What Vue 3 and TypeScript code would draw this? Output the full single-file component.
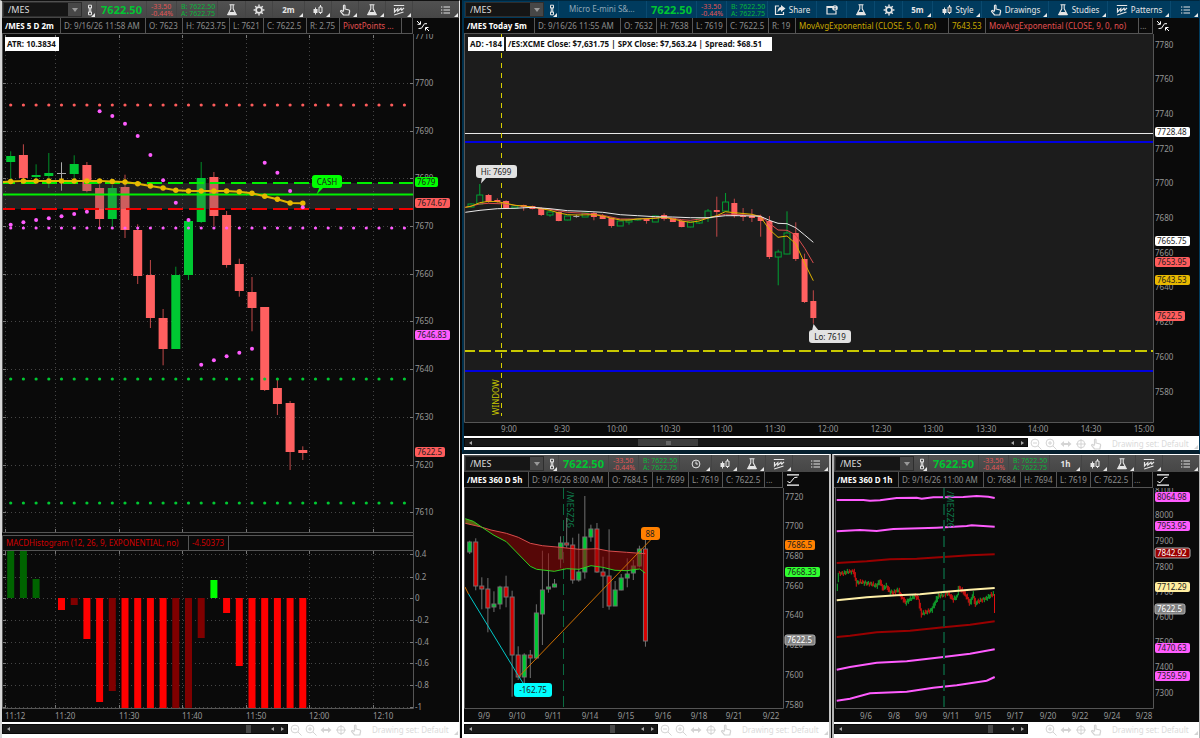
<script setup lang="ts">
type Kind = 'g' | 'r' | 'n'
type Row = [Kind, number, number, number, number]
interface Candle { kind: Kind; x: number; top: number; h: number; hi: number; lo: number }
interface Mark { x: number; y: number; t: string }
interface Tag { y: number; t: string; c: string }

// Plot data is stored on a fine grid of three steps to the unit.
const at = (origin: number, step: number): number => Math.round((origin + step / 3) * 10) / 10
const line = (ox: number, oy: number, pts: number[][]): string =>
  pts.map(([x, y]) => `${at(ox, x)},${at(oy, y)}`).join(' ')
const candles = (rows: Row[], x0: number, gap: number, oy: number): Candle[] =>
  rows.map(([kind, a, b, hi, lo], i) => ({
    kind, x: x0 + gap * i, top: Math.round(at(oy, a)), h: Math.max(1, Math.round(at(oy, b)) - Math.round(at(oy, a))), hi: at(oy, hi), lo: at(oy, lo),
  }))
const labels = (xs: number[], ts: string[]): Mark[] => xs.map((x, i) => ({ x, y: 0, t: ts[i] }))
const prices = (ys: number[], from: number, step: number): Mark[] => ys.map((y, i) => ({ x: 0, y, t: String(from - step * i) }))

/* two-minute chart */
const slots = Array.from({ length: 32 }, (_, i) => 10.7 + 12.7 * i)
const gridX = [5, 55, 119, 182, 246, 309, 373]
const times1 = labels(gridX, ['11:12', '11:20', '11:30', '11:40', '11:50', '12:00', '12:10'])
const prices1 = prices([36, 83, 131, 178, 226, 274, 321, 369, 417, 465, 512], 7710, 10)
const candles1 = candles([
  ['g', 228, 246, 214, 297], ['r', 225, 293, 193, 297], ['g', 284, 291, 253, 297], ['g', 279, 288, 219, 324],
  ['n', 280, 282, 247, 332], ['g', 252, 282, 226, 300], ['r', 254, 332, 246, 337], ['r', 324, 417, 313, 441],
  ['g', 324, 417, 315, 441], ['r', 322, 450, 284, 474], ['r', 450, 588, 433, 612], ['r', 586, 715, 540, 744],
  ['r', 713, 807, 687, 856], ['g', 584, 807, 560, 807], ['g', 423, 586, 415, 600], ['g', 293, 426, 246, 429],
  ['r', 291, 408, 276, 438], ['r', 405, 555, 393, 563], ['r', 552, 633, 536, 650], ['r', 635, 683, 591, 754],
  ['r', 681, 929, 681, 933], ['r', 924, 972, 900, 1005], ['r', 968, 1115, 963, 1170], ['r', 1110, 1119, 1099, 1140],
], 10.7, 12.7, 80)
const average1 = [181.5, 181, 181, 181, 181, 181, 181, 181, 181.5, 182, 183.7, 186, 188, 190.3, 191, 191, 191, 191, 191.7, 193.3, 196.3, 199.3, 203, 203.3]
const averageLine1 = '3,182 ' + average1.map((y, i) => `${slots[i]},${y}`).join(' ')
const sar = [224.7, 222.3, 220, 218.3, 216.3, 214, 211.7, 111.3, 116, 123.7, 136, 155, 180.3, 202.7, 220, 364.7, 360.3, 356.3, 352.7, 348.7, 162.7, 172.7, 191, 207.3]
const pivots = [{ y: 105, c: 'coral' }, { y: 228, c: 'pink' }, { y: 379, c: 'leaf' }, { y: 503, c: 'leaf' }]
const tags1: Tag[] = [{ y: 182, t: '7679', c: 'lime' }, { y: 203, t: '7674.67', c: 'coral' }, { y: 335, t: '7646.83', c: 'pink' }, { y: 452, t: '7622.5', c: 'coral' }]
const macdGrid: Mark[] = [554, 577, 598, 620, 642, 663, 685, 707].map((y, i) => ({ x: 0, y, t: ['0.4', '0.2', '0', '-0.2', '-0.4', '-0.6', '-0.8', '-1'][i] }))
const macd: [number, number, number, string][] = [
  [0, 551, 598, 'deep'], [1, 551, 598, 'deep'], [2, 579, 598, 'deep'], [4, 598, 610, 'hot'], [5, 598, 605, 'wine'],
  [6, 598, 639, 'hot'], [7, 598, 702, 'hot'], [8, 598, 691, 'wine'], [9, 598, 708, 'hot'], [10, 598, 708, 'hot'],
  [11, 598, 708, 'hot'], [12, 598, 708, 'hot'], [13, 598, 708, 'wine'], [14, 598, 708, 'wine'], [15, 598, 638, 'wine'],
  [16, 580, 598, 'lime'], [17, 598, 613, 'hot'], [18, 598, 666, 'hot'], [19, 598, 708, 'hot'], [20, 598, 708, 'hot'],
  [21, 598, 708, 'hot'], [22, 598, 708, 'hot'], [23, 598, 708, 'hot'],
]

/* five-minute chart */
const prices2 = prices([45, 79, 114, 149, 183, 218, 253, 287, 322, 357, 392], 7780, 20)
const times2 = labels([509, 562, 617, 670, 722, 775, 828, 881, 933, 986, 1038, 1091, 1144],
  ['9:00', '9:30', '10:00', '10:30', '11:00', '11:30', '12:00', '12:30', '13:00', '13:30', '14:00', '14:30', '15:00'])
const candles2 = candles([
  ['g', 251, 260, 250, 262], ['g', 226, 253, 192, 255], ['r', 225, 246, 222, 248], ['r', 239, 247, 235, 248],
  ['r', 243, 265, 241, 266], ['g', 257, 265, 257, 265], ['r', 256, 262, 254, 272], ['r', 258, 266, 257, 268],
  ['r', 265, 285, 262, 288], ['g', 277, 284, 274, 290], ['r', 276, 303, 275, 304], ['g', 289, 301, 289, 301],
  ['n', 287, 289, 284, 293], ['g', 278, 290, 278, 290], ['r', 278, 291, 276, 301], ['r', 287, 297, 282, 297],
  ['r', 295, 318, 292, 323], ['g', 304, 317, 304, 317], ['g', 299, 307, 296, 314], ['g', 296, 300, 294, 302],
  ['r', 296, 303, 294, 311], ['g', 287, 305, 287, 305], ['r', 285, 296, 280, 302], ['r', 295, 306, 293, 306],
  ['r', 302, 320, 300, 322], ['g', 306, 322, 306, 322], ['g', 297, 308, 294, 312], ['g', 274, 294, 267, 306],
  ['r', 271, 275, 230, 350], ['g', 247, 272, 219, 275], ['r', 248, 287, 236, 293], ['r', 287, 291, 264, 303],
  ['r', 287, 294, 267, 306], ['r', 291, 303, 284, 350], ['r', 303, 411, 288, 417], ['g', 397, 411, 389, 496],
  ['g', 339, 401, 274, 403], ['r', 339, 416, 307, 423], ['r', 416, 545, 401, 549], ['r', 543, 594, 511, 611],
], 471, 8.778, 120)
const fast = line(460, 120, [[16, 262], [33, 259], [59, 248], [86, 244], [112, 245], [138, 250], [165, 256], [191, 258], [217, 261], [244, 266], [270, 271], [297, 279], [323, 284], [349, 285], [402, 284], [428, 288], [455, 295], [481, 300], [507, 300], [533, 297], [586, 295], [612, 292], [638, 297], [665, 303], [691, 307], [717, 303], [744, 294], [770, 287], [796, 275], [823, 278], [876, 283], [901, 290], [928, 328], [954, 352], [981, 348], [1007, 371], [1034, 430], [1060, 482]])
const middle = line(460, 120, [[16, 262], [59, 252], [86, 250], [138, 252], [165, 256], [217, 262], [270, 268], [323, 277], [375, 280], [428, 286], [481, 297], [533, 297], [586, 294], [612, 291], [665, 299], [691, 301], [744, 294], [796, 283], [823, 283], [901, 287], [928, 310], [954, 330], [981, 331], [1007, 345], [1034, 385], [1060, 429]])
const slow = line(460, 120, [[16, 277], [60, 271], [112, 266], [165, 265], [217, 262], [270, 266], [323, 272], [375, 274], [428, 277], [481, 284], [533, 287], [586, 290], [638, 291], [691, 293], [744, 293], [796, 287], [850, 287], [901, 289], [928, 301], [954, 310], [981, 311], [1007, 323], [1034, 345], [1060, 367]])
const tags2: Tag[] = [{ y: 132, t: '7728.48', c: 'white' }, { y: 241, t: '7665.75', c: 'white' }, { y: 262, t: '7653.95', c: 'coral' }, { y: 280, t: '7643.53', c: 'gold' }, { y: 316, t: '7622.5', c: 'coral' }]

/* five-hour chart */
const prices3 = prices([497, 526, 556, 586, 615, 645, 675, 705], 7720, 20)
const times3 = labels([484, 517, 553, 590, 626, 663, 699, 734, 771], ['9/9', '9/10', '9/11', '9/14', '9/15', '9/16', '9/18', '9/21', '9/22'])
const candles3 = candles([
  ['g', 187, 216, 182, 222], ['r', 187, 319, 175, 331], ['r', 318, 326, 292, 388], ['r', 328, 384, 294, 457],
  ['g', 373, 382, 334, 396], ['g', 320, 373, 317, 388], ['r', 320, 352, 287, 382], ['r', 352, 524, 332, 650],
  ['r', 524, 591, 499, 600], ['g', 524, 591, 520, 610], ['r', 525, 533, 510, 594], ['g', 400, 535, 373, 538],
  ['g', 329, 403, 212, 495], ['g', 321, 328, 220, 338], ['g', 313, 322, 297, 322], ['g', 190, 238, 169, 265],
  ['r', 189, 196, 113, 203], ['r', 195, 299, 173, 311], ['g', 276, 299, 161, 305], ['g', 171, 276, 48, 296],
  ['g', 147, 171, 134, 185], ['r', 147, 275, 129, 278], ['r', 277, 287, 230, 384], ['r', 288, 377, 148, 389],
  ['g', 329, 377, 303, 377], ['g', 295, 330, 282, 331], ['g', 281, 294, 235, 322], ['g', 259, 280, 240, 300],
  ['g', 207, 259, 197, 262], ['r', 207, 484, 180, 500],
], 469.7, 6.06, 480)
const upper = [[16, 130], [60, 140], [93, 150], [139, 160], [175, 172], [211, 190], [247, 197], [300, 202], [357, 208], [410, 206], [446, 213], [500, 217], [556, 221]]
const lower = [[16, 116], [40, 124], [66, 142], [102, 166], [139, 185], [175, 222], [211, 259], [230, 268], [283, 274], [320, 266], [357, 268], [393, 257], [428, 262], [465, 271], [501, 272], [520, 269], [539, 267], [556, 279]]
const upperLine = line(460, 480, upper)
const lowerLine = line(460, 480, lower)
const cloud = line(460, 480, [[66, 142], ...upper.slice(2), ...[...lower].reverse().slice(0, 15)])
const tip = line(460, 480, [[16, 130], [60, 140], [66, 142], [40, 124], [16, 116]])
const tags3: Tag[] = [{ y: 545, t: '7686.5', c: 'orange' }, { y: 572, t: '7668.33', c: 'spring' }, { y: 640, t: '7622.5', c: 'gray' }]

/* one-hour chart */
const prices4 = prices([490, 515, 541, 567, 592, 617, 642, 667, 693], 8100, 100)
const times4 = labels([866, 894, 921, 951, 983, 1015, 1048, 1080, 1112, 1144], ['9/6', '9/8', '9/9', '9/11', '9/15', '9/17', '9/20', '9/22', '9/24', '9/28'])
const bands: { c: string; p: string }[] = [
  { c: 'pink', p: line(830, 480, [[20, 60], [100, 60], [120, 62], [150, 61], [200, 54], [260, 53], [275, 56], [310, 52], [400, 51], [440, 48], [475, 50], [494, 54]]) },
  { c: 'pink', p: line(830, 480, [[20, 154], [90, 150], [140, 153], [190, 147], [270, 145], [320, 143], [410, 138], [425, 136], [494, 140]]) },
  { c: 'blood', p: line(830, 480, [[20, 249], [110, 244], [180, 238], [260, 236], [340, 231], [420, 226], [494, 223]]) },
  { c: 'blood', p: line(830, 480, [[20, 471], [60, 467], [140, 457], [240, 452], [340, 442], [420, 434], [494, 424]]) },
  { c: 'pink', p: line(830, 480, [[20, 569], [60, 561], [140, 548], [230, 544], [340, 531], [420, 521], [494, 508]]) },
  { c: 'pink', p: line(830, 480, [[20, 662], [60, 656], [120, 640], [230, 635], [310, 623], [380, 616], [470, 602], [494, 591]]) },
]
const mean = line(830, 480, [[20, 361], [110, 352], [200, 346], [270, 343], [340, 336], [420, 329], [494, 324]])
const route = [[22, 322], [26, 280], [40, 280], [55, 275], [72, 275], [80, 308], [95, 306], [110, 310], [125, 312], [140, 318], [150, 304], [160, 325], [170, 318], [180, 335], [190, 338], [205, 330], [215, 350], [228, 368], [240, 358], [255, 348], [265, 355], [275, 402], [290, 396], [305, 390], [315, 370], [325, 348], [340, 345], [355, 340], [370, 358], [382, 350], [386, 322], [400, 335], [412, 352], [420, 370], [430, 345], [436, 370], [450, 362], [470, 355], [480, 348], [490, 342], [494, 397]]
const hourly = Array.from({ length: 157 }, (_, i) => {
  const x = 22 + i * 3
  const k = Math.max(1, route.findIndex((p) => p[0] >= x))
  const [x1, y1] = route[k - 1]
  const [x2, y2] = route[k]
  const slope = (y2 - y1) / (x2 - x1)
  const y = y1 + slope * (x - x1) + Math.sin(i * 2.4) * 3
  const reach = 3 + Math.min(8, Math.abs(slope) * 2) + Math.abs(Math.sin(i * 1.7)) * 3
  const rising = slope < -0.6 || (slope < 0.6 && Math.sin(i * 1.9) > 0)
  return { x: at(830, x), a: at(480, y - reach), b: at(480, y + reach), kind: rising ? 'g' : 'r' }
})
const tags4: Tag[] = [{ y: 497, t: '8064.98', c: 'pink' }, { y: 526, t: '7953.95', c: 'pink' }, { y: 553, t: '7842.92', c: 'blood' }, { y: 587, t: '7712.29', c: 'cream' }, { y: 609, t: '7622.5', c: 'gray' }, { y: 648, t: '7470.63', c: 'pink' }, { y: 676, t: '7359.59', c: 'pink' }]

const tagWidth = (t: string): number => (t.length > 6 ? 35 : t.length > 4 ? 30 : 23)

interface Tool { icon?: string; text?: string; label: string; size: string; menu?: boolean }
interface Panel { id: string; name?: string; tools: Tool[]; info: { t: string; c?: string }[]; corner: string; hideOut?: boolean }
const shortTools = (first: Tool): Tool[] => [
  first,
  { icon: 'bars', label: 'Style', size: 'w27', menu: true },
  { icon: 'flask', label: 'Studies', size: 'w27', menu: true },
  { icon: 'pattern', label: 'Patterns', size: 'w27', menu: true },
]
const panels: Record<string, Panel> = {
  one: {
    id: 'one', corner: 'swap',
    tools: [
      { icon: 'flask', label: 'Edit studies', size: 'w28' }, { icon: 'gear', label: 'Settings', size: 'w27' },
      { text: '2m', label: 'Time frame', size: 'w32', menu: true }, { icon: 'bars', label: 'Style', size: 'w27', menu: true },
      { icon: 'hand', label: 'Drawings', size: 'w27', menu: true }, { icon: 'flask', label: 'Studies', size: 'w27', menu: true },
      { icon: 'pattern', label: 'Patterns', size: 'w27', menu: true },
    ],
    info: [{ t: '/MES 5 D 2m', c: 'title' }, { t: 'D: 9/16/26 11:58 AM' }, { t: 'O: 7623' }, { t: 'H: 7623.75' }, { t: 'L: 7621' }, { t: 'C: 7622.5' }, { t: 'R: 2.75' }, { t: 'PivotPoints ...', c: 'salmon' }, { t: '' }],
  },
  two: {
    id: 'two', name: 'Micro E-mini S&...', corner: 'swap',
    tools: [
      { icon: 'share', text: 'Share', label: 'Share', size: 'w49' }, { icon: 'note', label: 'Notes', size: 'w30' },
      { icon: 'flask', label: 'Edit studies', size: 'w28' }, { icon: 'gear', label: 'Settings', size: 'w28' },
      { text: '5m', label: 'Time frame', size: 'w30', menu: true }, { icon: 'bars', text: 'Style', label: 'Style', size: 'w49', menu: true },
      { icon: 'hand', text: 'Drawings', label: 'Drawings', size: 'w67', menu: true }, { icon: 'flask', text: 'Studies', label: 'Studies', size: 'w59', menu: true },
      { icon: 'pattern', text: 'Patterns', label: 'Patterns', size: 'w63', menu: true },
    ],
    info: [{ t: '/MES Today 5m', c: 'title' }, { t: 'D: 9/16/26 11:55 AM' }, { t: 'O: 7632' }, { t: 'H: 7638' }, { t: 'L: 7619' }, { t: 'C: 7622.5' }, { t: 'R: 19' }, { t: 'MovAvgExponential (CLOSE, 5, 0, no)', c: 'amber' }, { t: '7643.53', c: 'amber' }, { t: 'MovAvgExponential (CLOSE, 9, 0, no)', c: 'salmon' }, { t: '...', c: 'tight' }],
  },
  three: {
    id: 'three', corner: 'fit', tools: shortTools({ icon: 'clock', label: 'Time frame', size: 'w32', menu: true }),
    info: [{ t: '/MES 360 D 5h', c: 'title' }, { t: 'D: 9/16/26 8:00 AM' }, { t: 'O: 7684.5' }, { t: 'H: 7699' }, { t: 'L: 7619' }, { t: 'C: 7622.5' }, { t: '...', c: 'tight' }],
  },
  four: {
    id: 'four', corner: 'fit', hideOut: true, tools: shortTools({ text: '1h', label: 'Time frame', size: 'w32', menu: true }),
    info: [{ t: '/MES 360 D 1h', c: 'title' }, { t: 'D: 9/16/26 11:00 AM' }, { t: 'O: 7684' }, { t: 'H: 7694' }, { t: 'L: 7619' }, { t: 'C: 7622.5' }, { t: '...', c: 'tight' }],
  },
}
const order = ['one', 'two', 'three', 'four'].map((k) => panels[k])
</script>

<template>
  <main class="desk">
    <svg class="sprite" aria-hidden="true">
      <symbol id="flask" viewBox="0 0 12 12"><path d="M3.5.8h5M4.800 1v3.800L1.800 10.500h8.400L7.200 4.800V1" fill="none" stroke="currentColor" stroke-width="1.100" /><path d="M3.300 8h5.400l1.800 3.200h-9z" fill="currentColor" /></symbol>
      <symbol id="gear" viewBox="0 0 12 12"><circle cx="6" cy="6" r="2.900" fill="none" stroke="currentColor" stroke-width="1.700" /><path d="M6 .6v2M6 9.400v2M.6 6h2M9.400 6h2M2.200 2.200l1.400 1.400M8.400 8.400l1.400 1.400M9.800 2.200L8.400 3.600M3.600 8.400L2.200 9.800" stroke="currentColor" stroke-width="1.400" /></symbol>
      <symbol id="bars" viewBox="0 0 12 12"><path d="M3.500 3.500v7M8.500 1v9" stroke="currentColor" /><path d="M1.500 5h4v4h-4z" fill="currentColor" /><path d="M7 3h3v5.500H7z" fill="#555" stroke="currentColor" /></symbol>
      <symbol id="hand" viewBox="0 0 12 12"><path d="M4.500 7V1.700q.8-1 1.500 0V5l4 1q.8.4.6 1.500L9.800 11H4.600L1.500 7.400q.3-1.400 1.500-.7l1.500 1" fill="none" stroke="currentColor" stroke-width="1.200" stroke-linejoin="round" /></symbol>
      <symbol id="pattern" viewBox="0 0 12 12"><path d="M.8 1.500h10.400M1.200 11L10.500 8M1.500 4v4l3.300-3.300v2.500l3.200-3 .8 2L11 3.800" fill="none" stroke="currentColor" stroke-width="1.200" /></symbol>
      <symbol id="list" viewBox="0 0 12 12"><path d="M2 3h1.300M2 6h1.300M2 9h1.300M4.500 3H11M4.500 6H11M4.500 9H11" stroke="currentColor" stroke-width="1.200" /></symbol>
      <symbol id="clock" viewBox="0 0 12 12"><circle cx="6" cy="6" r="3.900" fill="none" stroke="currentColor" /><path d="M6 3.500V6h2" fill="none" stroke="currentColor" /></symbol>
      <symbol id="link" viewBox="0 0 12 12"><path d="M4.500 1.200h3v3h-3zM4.500 7.800h3v3h-3zM6 3v6M4.500 6h3" fill="none" stroke="currentColor" /></symbol>
      <symbol id="share" viewBox="0 0 12 12"><path d="M5 2H1.500v8.500h8V8" fill="none" stroke="currentColor" stroke-width="1.200" /><path d="M7 1l4.500 3.500L7 8V6Q4.500 6 3.500 8.500 3.500 3.500 7 3z" fill="currentColor" /></symbol>
      <symbol id="note" viewBox="0 0 12 12"><path d="M7 2.500H1v7.500h9V7M1 3.500h6" fill="none" stroke="currentColor" stroke-width="1.200" /><circle cx="9" cy="4" r="2.800" fill="currentColor" /><path d="M9 2.300v1M9 4v1.700" stroke="#003b5e" /></symbol>
      <symbol id="swap" viewBox="0 0 14 12"><path d="M1 1l3 3M1.500 4.300h3V1.300M2.500 8.500l3-.3 3-4.500h2.500M13 11l-3-3M9.500 10.500v-3h3" fill="none" stroke="currentColor" /></symbol>
      <symbol id="fit" viewBox="0 0 14 12"><path d="M1 .8h12M1 11.200h12" stroke="currentColor" stroke-width="1.300" /><path d="M1.500 7.500l2.500 1.300L8.500 3.500l3-.3" fill="none" stroke="currentColor" /></symbol>
      <symbol id="out" viewBox="0 0 12 12"><circle cx="5" cy="5" r="3.900" fill="none" stroke="currentColor" /><path d="M8 8l3.500 3.500M3 5h4" stroke="currentColor" /></symbol>
      <symbol id="in" viewBox="0 0 12 12"><circle cx="5" cy="5" r="3.900" fill="none" stroke="currentColor" /><path d="M8 8l3.500 3.500M3 5h4M5 3v4" stroke="currentColor" /></symbol>
      <symbol id="span" viewBox="0 0 12 12"><path d="M.5 6L4 3v2h4V3l3.500 3L8 9V7H4v2z" fill="currentColor" /></symbol>
      <symbol id="cross" viewBox="0 0 12 12"><circle cx="6" cy="6" r="3.800" fill="none" stroke="currentColor" /><path d="M6 1v10M1 6h10" stroke="currentColor" /></symbol>
    </svg>

    <section v-for="p in order" :key="p.id" class="panel" :class="p.id">
      <header class="toolbar">
        <div class="symbol">
          <label class="unseen" :for="'sym-' + p.id">Symbol</label>
          <input :id="'sym-' + p.id" type="text" value="/MES">
          <button type="button" class="drop" aria-label="Recent symbols"></button>
        </div>
        <button type="button" class="tool link menu" aria-label="Link"><svg><use href="#link" /></svg></button>
        <span v-if="p.name" class="name">{{ p.name }}</span>
        <strong class="last">7622.50</strong>
        <span class="pair change"><span>-33.50</span><span>-0.44%</span></span>
        <span class="pair quote"><span>B: 7622.50</span><span>A: 7622.75</span></span>
        <button v-for="(tool, i) in p.tools" :key="i" type="button" class="tool" :class="[tool.size, { menu: tool.menu, only: !tool.icon }]" :aria-label="tool.label">
          <svg v-if="tool.icon"><use :href="'#' + tool.icon" /></svg>
          <span v-if="tool.text">{{ tool.text }}</span>
        </button>
        <button type="button" class="tool menu more" aria-label="Menu"><svg><use href="#list" /></svg></button>
      </header>

      <div class="info">
        <span v-for="(c, i) in p.info" :key="i" class="cell" :class="c.c">{{ c.t }}</span>
        <button type="button" class="corner" aria-label="Scale"><svg><use :href="'#' + p.corner" /></svg></button>
      </div>

      <svg v-if="p.id === 'one'" class="chart" viewBox="2 34 457 688" role="img" aria-label="Two minute chart">
        <g class="grid">
          <path v-for="x in gridX" :key="x" :d="`M${x}.500 35V532M${x}.500 551V708`" />
          <path v-for="m in prices1.slice(1)" :key="m.t" :d="`M3 ${m.y}.500H413`" />
          <path v-for="m in macdGrid" :key="m.t" :d="`M3 ${m.y}.500H413`" />
        </g>
        <g class="ticks">
          <path v-for="x in gridX" :key="x" :d="`M${x}.500 529v3M${x}.500 551v3M${x}.500 705v3M${x}.500 35v3`" />
          <path v-for="m in [...prices1.slice(1), ...macdGrid]" :key="m.t" :d="`M2 ${m.y}.500h4M410 ${m.y}.500h4`" />
        </g>
        <g v-for="(c, i) in candles1" :key="i" :class="c.kind">
          <path :d="`M${c.x} ${c.hi}V${c.lo}`" />
          <rect :x="c.x - 4.500" :y="c.top" width="9" :height="c.h" />
        </g>
        <rect class="zone" x="3" y="183" width="410" height="26" />
        <path class="dash lime-line" d="M3 183H413" />
        <path class="solid lime-line" d="M3 194.500H413" />
        <path class="dash red-line" d="M3 209H413" />
        <polyline class="gold-line thick" :points="averageLine1" />
        <circle v-for="(y, i) in average1" :key="i" class="gold" :cx="slots[i]" :cy="y" r="2.700" />
        <circle v-for="(y, i) in sar" :key="'s' + i" class="pink" :cx="slots[i]" :cy="y" r="2" />
        <g v-for="v in pivots" :key="v.y" :class="v.c"><circle v-for="x in slots" :key="x" :cx="x" :cy="v.y" r="1.600" /></g>
        <g class="bubble lime"><path d="M320 186l-3.500 8.500L324 187z" /><rect x="312" y="175" width="30" height="13" rx="3" /><text x="327" y="185">CASH</text></g>
        <g class="frame">
          <path d="M2.500 34V532.500H413.500V34M413.500 532.500V708.500H2.500V535.500H413.500M2.500 550.500H413.500M188.500 536V550M228.500 536V550" />
        </g>
        <text class="hot" x="6" y="546">MACDHistogram (12, 26, 9, EXPONENTIAL, no)</text>
        <text class="hot" x="192" y="546">-4.50373</text>
        <rect v-for="b in macd" :key="b[0]" :class="b[3]" :x="slots[b[0]] - 3.500" :y="b[1]" width="7" :height="b[2] - b[1]" />
        <text v-for="m in [...prices1, ...macdGrid]" :key="m.t" x="415" :y="m.y + 3">{{ m.t }}</text>
        <text v-for="m in times1" :key="m.t" :x="m.x" y="719">{{ m.t }}</text>
        <g v-for="t in tags1" :key="t.t" class="tag" :class="t.c"><rect x="415" :y="t.y - 5" :width="tagWidth(t.t)" height="10" rx="2" /><text x="417" :y="t.y + 3">{{ t.t }}</text></g>
        <g class="note"><rect x="5" y="37" width="54" height="14" /><text x="7" y="47">ATR: 10.3834</text></g>
      </svg>

      <svg v-else-if="p.id === 'two'" class="chart" viewBox="464 34 735 402" role="img" aria-label="Five minute chart">
        <rect class="plot" x="465" y="34" width="688" height="388" />
        <path class="white-line" d="M465 133.500H1153" />
        <path class="blue-line" d="M465 142H1153M465 371H1153" />
        <path class="window" d="M501.500 33V416" />
        <path class="floor" d="M465 351H1153" />
        <g v-for="(c, i) in candles2" :key="i" class="hollow" :class="c.kind">
          <path :d="`M${c.x} ${c.hi}V${c.top}M${c.x} ${c.top + c.h}V${c.lo}`" />
          <rect :x="c.x - 3" :y="c.top" width="6" :height="c.h" />
        </g>
        <polyline class="salmon-line" :points="middle" />
        <polyline class="gold-line" :points="fast" />
        <polyline class="white-line" :points="slow" />
        <g class="bubble pale"><path d="M482 177l-1 6.500L487 177z" /><rect x="476" y="165" width="41" height="13" rx="3" /><text x="496" y="175">Hi: 7699</text></g>
        <g class="bubble pale"><path d="M812 331l1.500-7L819 331z" /><rect x="809" y="330" width="42" height="13" rx="3" /><text x="830" y="340">Lo: 7619</text></g>
        <text class="upright yellow" transform="translate(499 415) rotate(-90)">WINDOW</text>
        <path class="frame" d="M464.500 34V422.500H1153.500V34" />
        <text v-for="m in prices2" :key="m.t" x="1155" :y="m.y + 3">{{ m.t }}</text>
        <text v-for="m in times2" :key="m.t" class="mid" :x="m.x" y="432">{{ m.t }}</text>
        <g v-for="t in tags2" :key="t.t" class="tag" :class="t.c"><rect x="1155" :y="t.y - 5" :width="tagWidth(t.t)" height="10" rx="2" /><text x="1157" :y="t.y + 3">{{ t.t }}</text></g>
        <g class="note"><rect x="468" y="37" width="36" height="14" /><text x="470" y="47">AD: -184</text><rect x="506" y="37" width="266" height="14" /><text x="508" y="47">/ES:XCME Close: $7,631.75 | SPX Close: $7,563.24 | Spread: $68.51</text></g>
      </svg>

      <svg v-else-if="p.id === 'three'" class="chart" viewBox="464 488 365 234" role="img" aria-label="Five hour chart">
        <path class="roll" d="M563.500 488V708" />
        <text class="roll-text" transform="translate(567 491) rotate(90)">/MESZ26</text>
        <g v-for="(c, i) in candles3" :key="i" class="boxed" :class="c.kind">
          <path :d="`M${c.x} ${c.hi}V${c.lo}`" />
          <rect :x="c.x - 2" :y="c.top" width="4" :height="c.h" />
        </g>
        <polygon class="cloud" :points="cloud" />
        <polygon class="tip" :points="tip" />
        <polyline class="salmon-line" :points="upperLine" />
        <polyline class="green-line" :points="lowerLine" />
        <path class="orange-line" d="M465 587l3.500 7M518.500 677L650.500 540" />
        <path class="cyan-line" d="M468.500 594L518.500 676L523 683" />
        <g class="bubble orange"><rect x="641" y="527" width="19" height="13" rx="3" /><text x="650" y="537">88</text></g>
        <g class="bubble cyan"><rect x="514" y="683" width="38" height="14" rx="3" /><text x="533" y="693">-162.75</text></g>
        <path class="frame" d="M464.500 488V708.500H783.500V488" />
        <text v-for="m in prices3" :key="m.t" x="785" :y="m.y + 3">{{ m.t }}</text>
        <text v-for="m in times3" :key="m.t" class="mid" :x="m.x" y="719">{{ m.t }}</text>
        <g v-for="t in tags3" :key="t.t" class="tag" :class="t.c"><rect x="785" :y="t.y - 5" :width="tagWidth(t.t)" height="10" rx="2" /><text x="787" :y="t.y + 3">{{ t.t }}</text></g>
      </svg>

      <svg v-else class="chart" viewBox="834 488 365 234" role="img" aria-label="One hour chart">
        <path v-for="(h, i) in hourly" :key="i" class="hour" :class="h.kind" :d="`M${h.x} ${h.a}V${h.b}`" />
        <path class="hour r" d="M994.500 594V613" />
        <polyline v-for="(b, i) in bands" :key="i" class="band" :class="b.c" :points="b.p" />
        <path class="roll wide" d="M944 488V708" />
        <polyline class="band cream" :points="mean" />
        <text class="roll-text" transform="translate(947 491) rotate(90)">/MESZ26</text>
        <path class="frame" d="M835.500 488V708.500H1153.500V488" />
        <text v-for="m in prices4" :key="m.t" x="1155" :y="m.y + 3">{{ m.t }}</text>
        <text v-for="m in times4" :key="m.t" class="mid" :x="m.x" y="719">{{ m.t }}</text>
        <g v-for="t in tags4" :key="t.t" class="tag" :class="t.c"><rect x="1155" :y="t.y - 5" :width="tagWidth(t.t)" height="10" rx="2" /><text x="1157" :y="t.y + 3">{{ t.t }}</text></g>
      </svg>

      <footer class="status">
        <div class="track">
          <button type="button" class="arrow back" aria-label="Scroll left"></button>
          <span class="lane"><span class="thumb"></span></span>
          <button type="button" class="arrow back" aria-label="Step left"></button>
          <button type="button" class="arrow" aria-label="Step right"></button>
        </div>
        <div class="aids">
          <button type="button" aria-label="Zoom out" :class="{ gone: p.hideOut }"><svg><use href="#out" /></svg></button>
          <button type="button" aria-label="Zoom in"><svg><use href="#in" /></svg></button>
          <button type="button" aria-label="Fit width"><svg><use href="#span" /></svg></button>
          <button type="button" aria-label="Crosshair"><svg><use href="#cross" /></svg></button>
          <button type="button" aria-label="Pan"><svg><use href="#hand" /></svg></button>
          <button type="button" class="set menu">Drawing set: Default</button>
        </div>
      </footer>
    </section>
  </main>
</template>

<style>
html, body { background: #050505; }
</style>

<style scoped>
.desk {
  display: grid;
  grid-template-columns: minmax(0, 460fr) minmax(0, 371fr) minmax(0, 369fr);
  grid-template-rows: auto auto;
  font-family: "Noto Sans", "Open Sans", sans-serif;
  font-size: 8px;
  line-height: 10px;
  color: #8c8c8c;
}
.desk * { box-sizing: border-box; }
.sprite { position: absolute; width: 0; height: 0; }
.unseen { position: absolute; width: 1px; height: 1px; overflow: hidden; clip-path: inset(50%); }
button, input { font: inherit; color: inherit; border: 0; padding: 0; margin: 0; background: none; min-width: 0; }

.panel { background: #0a0a0a; border-top: 1px solid #111; }
.one { grid-row: 1 / 3; border-left: 2px solid #d8d8d8; border-right: 1px solid #e8e8e8; }
.two { grid-column: 2 / 4; margin-left: 2px; border-left: 2px solid #00304c; border-right: 1px solid #003b5e; border-top-color: #00263c; border-bottom: 4px solid #06202f; }
.three { margin-left: 2px; border: solid #c4c4c4; border-width: 1px 2px 0; border-top-color: #fff; border-left-color: #fff; }
.four { margin-left: 1px; border: solid #b4b4b4; border-width: 1px 1px 0 2px; border-top-color: #fff; }

.toolbar { display: flex; align-items: stretch; height: 17px; background: linear-gradient(#515151, #464646); color: #e6e6e6; }
.two .toolbar { background: #003b5e; }
.symbol { display: flex; width: 79px; margin: 1px; height: 15px; background: #151515; border: 1px solid #2e2e2e; }
.symbol input { flex: 1; height: 13px; padding-left: 4px; font-size: 9px; line-height: 13px; color: #dcdcdc; }
.drop { width: 13px; background: #474747; display: grid; place-items: center; }
.drop::before { content: ""; border: 3px solid transparent; border-top: 4px solid #999; border-bottom: 0; }
.tool { position: relative; display: flex; align-items: center; justify-content: center; gap: 3px; border-right: 1px solid #444; }
.two .tool, .two .last, .two .pair, .two .name { border-right-color: #0a4a70; }
.tool svg { width: 12px; height: 12px; }
.tool.only { font-weight: 700; }
.menu::after { content: ""; position: absolute; right: 1px; bottom: 1px; border: 2px solid transparent; border-right-color: #e8e8e8; border-bottom-color: #e8e8e8; }
.link { width: 14px; }
.w27 { width: 27px; }
.w28 { width: 28px; }
.w30 { width: 30px; }
.w32 { width: 32px; }
.w49 { width: 49px; }
.w59 { width: 59px; }
.w63 { width: 63px; }
.w67 { width: 67px; }
.more { width: 28px; margin-left: auto; border: 0; }
.name { width: 88px; padding: 3px 0 0 10px; color: #8fa6b5; border-right: 1px solid #444; white-space: nowrap; }
.last { width: 50px; font-size: 11px; line-height: 17px; text-align: center; color: #00c632; border-right: 1px solid #444; }
.pair { display: flex; flex-direction: column; justify-content: center; font-size: 7px; line-height: 7px; padding-left: 4px; border-right: 1px solid #444; white-space: nowrap; }
.change { width: 30px; color: #e05555; }
.quote { width: 41px; color: #0ab43a; }

.info { display: grid; height: 16px; color: #8c8c8c; }
.one .info { grid-template-columns: 59px 85px 37px 47px 34px 43px 33px 62px minmax(0, 1fr) 46px; }
.two .info { grid-template-columns: 71px 86px 36px 36px 34px 42px 27px 153px 37px 153px minmax(0, 1fr) 46px; }
.three .info { grid-template-columns: 65px 80px 44px 36px 34px 42px minmax(0, 1fr) 46px; }
.four .info { grid-template-columns: 65px 85px 37px 36px 34px 42px minmax(0, 1fr) 46px; }
.cell { border-right: 1px solid #555; border-bottom: 1px solid #555; padding: 3px 0 0 3px; white-space: nowrap; overflow: hidden; }
.title { font-weight: 700; color: #fff; }
.salmon { color: #e05050; }
.amber { color: #c8a800; }
.tight { padding-left: 1px; }
.corner { display: flex; align-items: center; padding-left: 3px; color: #fff; }
.corner svg { width: 14px; height: 12px; }

.chart { display: block; width: 100%; height: auto; font-size: 8px; }
.chart text { fill: #969696; }
.chart .mid { text-anchor: middle; }
.grid path { stroke: #464646; stroke-dasharray: 1 3; }
.ticks path { stroke: #777; }
.frame, .frame path { fill: none; stroke: #555; }
.plot { fill: #1c1c1c; }
.g { fill: #00c832; stroke: #008c28; }
.r { fill: #ff6060; stroke: #c04848; }
.n { fill: #aaa; stroke: #aaa; }
.g rect, .r rect, .n rect { stroke: none; }
.hollow.g { stroke: #00a032; }
.hollow.g rect { fill: #1c1c1c; stroke: #00a032; }
.boxed path { stroke: #707070; }
.boxed rect { stroke: #707070; }
.boxed.g { fill: #00c832; }
.boxed.r { fill: #d80000; }
.zone { fill: rgba(90, 90, 90, .3); }
.dash { stroke-width: 2; stroke-dasharray: 15 6; stroke-dashoffset: 3; }
.solid { stroke-width: 2; }
.lime-line { stroke: #00f000; }
.red-line { stroke: #f00000; }
.gold-line, .white-line, .salmon-line, .green-line, .orange-line, .cyan-line, .band { fill: none; stroke-width: 1; }
.gold-line { stroke: #e0b400; }
.thick { stroke-width: 2; }
.white-line { stroke: #e8e8e8; }
.salmon-line { stroke: #d84c4c; }
.green-line { stroke: #30d020; }
.orange-line { stroke: #d07000; }
.cyan-line { stroke: #00c8c8; }
.blue-line { stroke: #0000e0; stroke-width: 2; }
.floor { stroke: #c8c800; stroke-width: 2; stroke-dasharray: 12 4; stroke-dashoffset: 2; }
.window { stroke: #d8d000; stroke-dasharray: 5 5; }
.roll { stroke: #0a6b40; stroke-dasharray: 11 5; }
.wide { stroke: #0a4a30; stroke-width: 2; }
.chart .roll-text { fill: #0f7a4a; font-size: 9px; }
.chart .yellow { fill: #c8c800; }
.cloud { fill: rgba(150, 5, 5, .55); }
.tip { fill: #5a6010; }
.band { stroke-width: 2; }
.band.pink { stroke: #ff5cff; fill: none; }
.band.blood { stroke: #990000; fill: none; }
.band.cream { stroke: #fff0a8; fill: none; }
.hour.g { stroke: #10b030; }
.hour.r { stroke: #e01010; }
.pink { fill: #ff5cff; }
.coral { fill: #ff5c5c; }
.leaf { fill: #00c832; }
.gold { fill: #e8b800; }
.lime { fill: #00ff00; }
.white, .pale { fill: #fff; }
.pale { fill: #e2e2e2; }
.orange { fill: #ff8000; }
.cyan { fill: #00ffff; }
.spring { fill: #30ff30; }
.gray { fill: #808080; }
.blood { fill: #990000; }
.cream { fill: #ffeea0; }
.deep { fill: #006400; }
.wine { fill: #800000; }
.hot { fill: #ff0000; }
.chart text.hot { fill: #d00000; }
.chart .tag text { fill: #1c1c1c; }
.chart .gray text, .chart .blood text { fill: #fff; }
.gray rect, .tag.blood rect { stroke: #b0b0b0; }
.chart .bubble text { fill: #1c1c1c; text-anchor: middle; }
.note rect { fill: #fff; }
.chart .note text { fill: #111; font-weight: 700; }

.status { display: flex; background: #fff; height: 16px; padding-top: 2px; }
.two .status { height: 14px; }
.track { flex: 1; display: flex; height: 10px; background: #191919; border: 1px solid #0a0a0a; }
.two .track { height: 9px; }
.lane { flex: 1; display: flex; }
.thumb { width: 5px; background: #484848; }
.one .thumb { margin-left: 233px; }
.three .thumb, .four .thumb { margin-left: 135px; }
.four .thumb { margin-left: 143px; }
.two .thumb { width: 60px; margin-left: 163px; background: #3e3e3e; display: grid; place-items: center; }
.two .thumb::after { content: ""; width: 5px; height: 4px; background: #666; }
.arrow { width: 10px; display: grid; place-items: center; }
.arrow::before { content: ""; border: 2px solid transparent; border-left: 3px solid #aaa; border-right: 0; }
.arrow.back::before { border-left: 0; border-right: 3px solid #aaa; }
.aids { position: relative; width: 171px; display: flex; align-items: center; gap: 3px; padding-left: 2px; color: #d4d4d4; height: 12px; }
.aids button { height: 12px; flex: none; }
.aids svg { display: block; width: 12px; height: 12px; }
.aids .set { margin-left: 7px; white-space: nowrap; color: #dadada; }
.aids .menu::after { border-right-color: #d4d4d4; border-bottom-color: #d4d4d4; }
.gone { visibility: hidden; }
</style>
